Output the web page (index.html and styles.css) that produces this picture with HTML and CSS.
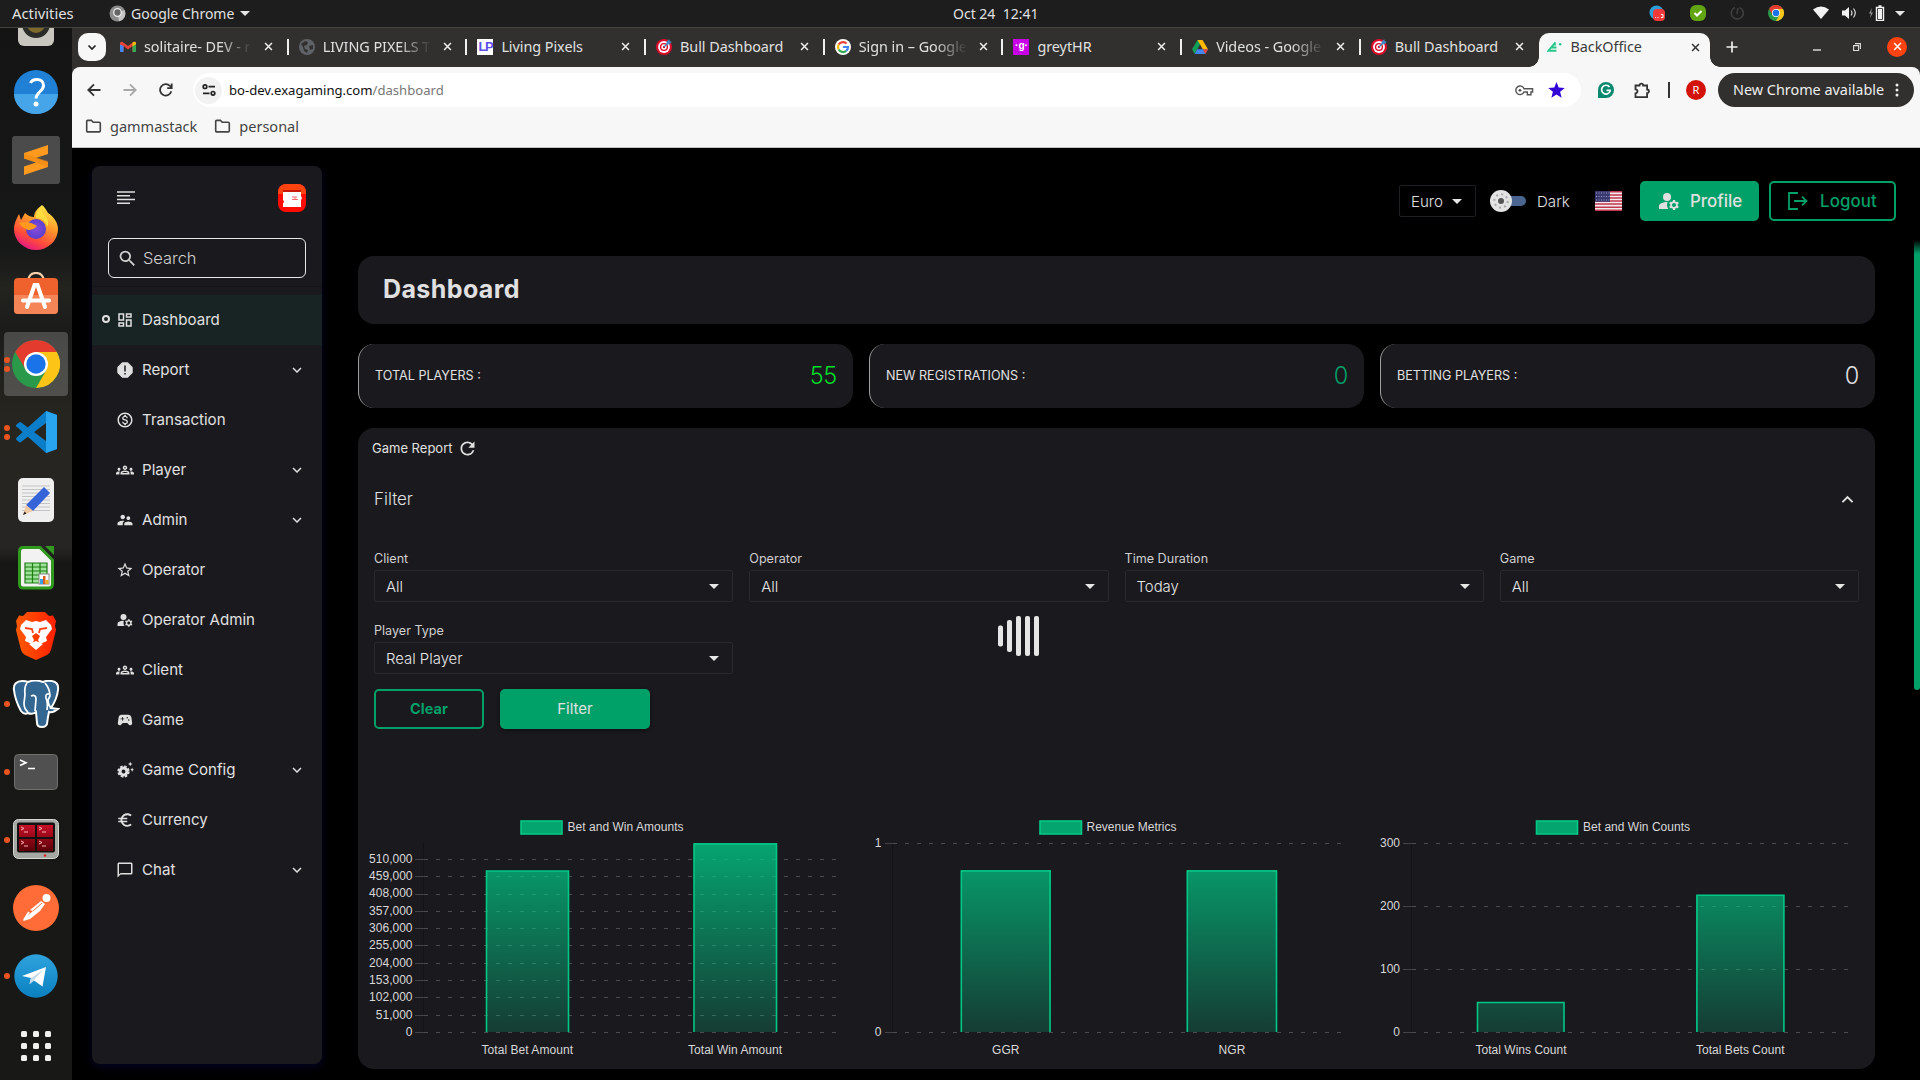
FILE: index.html
```
<!DOCTYPE html>
<html lang="en">
<head>
<meta charset="utf-8">
<title>BackOffice</title>
<link rel="stylesheet" href="styles.css">
</head>
<body>
<svg class="sprite" aria-hidden="true">
  <defs>
    <linearGradient id="bar" gradientUnits="userSpaceOnUse" x1="0" y1="43" x2="0" y2="233"><stop offset="0" stop-color="#00c885" stop-opacity=".8"/><stop offset="1" stop-color="#00c885" stop-opacity=".2"/></linearGradient>
    <linearGradient id="fox" x1=".8" y1="0" x2=".3" y2="1"><stop offset="0" stop-color="#fff44f"/><stop offset=".4" stop-color="#ff9a2a"/><stop offset=".75" stop-color="#ff4a3c"/><stop offset="1" stop-color="#e31587"/></linearGradient>
    <radialGradient id="globe"><stop offset="0" stop-color="#8a4bd8"/><stop offset="1" stop-color="#5b3fd0"/></radialGradient>
    <linearGradient id="tele" x1="0" y1="0" x2="0" y2="1"><stop offset="0" stop-color="#2fa3dd"/><stop offset="1" stop-color="#0a80c0"/></linearGradient>
    <linearGradient id="brave" x1="0" y1="0" x2="1" y2="0"><stop offset="0" stop-color="#ff5a00"/><stop offset="1" stop-color="#ff2000"/></linearGradient>
    <linearGradient id="red" x1="0" y1="0" x2="0" y2="1"><stop offset="0" stop-color="#c81028"/><stop offset="1" stop-color="#5c0008"/></linearGradient>
  </defs>
  <symbol id="search" viewBox="0 0 24 24"><path d="M15.5 14h-.79l-.28-.27A6.471 6.471 0 0 0 16 9.5 6.5 6.5 0 1 0 9.5 16c1.61 0 3.09-.59 4.23-1.57l.27.28v.79l5 4.99L20.49 19l-4.99-5zm-6 0C7.01 14 5 11.99 5 9.5S7.01 5 9.5 5 14 7.01 14 9.5 11.99 14 9.5 14z"/></symbol>
  <symbol id="dashboard" viewBox="0 0 24 24"><path d="M19 5v2h-4V5h4M9 5v6H5V5h4m10 8v6h-4v-6h4M9 17v2H5v-2h4M21 3h-8v6h8V3zM11 3H3v10h8V3zm10 8h-8v10h8V11zm-10 4H3v6h8v-6z"/></symbol>
  <symbol id="report" viewBox="0 0 24 24"><path d="M8.5 2.5h7l6 6v7l-6 6h-7l-6-6v-7zM11 6v8h2V6zm0 10v2h2v-2z" fill-rule="evenodd"/><path d="M8.5 2.5h7l6 6v7l-6 6h-7l-6-6v-7z" fill="none" stroke="currentColor" stroke-width="1.5" stroke-linejoin="round"/></symbol>
  <symbol id="money" viewBox="0 0 24 24"><path d="M12 2C6.48 2 2 6.48 2 12s4.48 10 10 10 10-4.48 10-10S17.52 2 12 2zm0 18c-4.41 0-8-3.59-8-8s3.59-8 8-8 8 3.59 8 8-3.59 8-8 8zm.31-8.86c-1.77-.45-2.34-.94-2.34-1.67 0-.84.79-1.43 2.1-1.43 1.38 0 1.9.66 1.94 1.64h1.71c-.05-1.34-.87-2.57-2.49-2.97V5H10.9v1.69c-1.51.32-2.72 1.3-2.72 2.81 0 1.79 1.49 2.69 3.66 3.21 1.95.46 2.34 1.15 2.34 1.87 0 .53-.39 1.39-2.1 1.39-1.6 0-2.23-.72-2.32-1.64H8.04c.1 1.7 1.36 2.66 2.86 2.97V19h2.34v-1.67c1.52-.29 2.72-1.16 2.73-2.77-.01-2.2-1.9-2.96-3.66-3.42z"/></symbol>
  <symbol id="groups" viewBox="0 0 24 24"><path fill-rule="evenodd" d="M12 12.75c1.63 0 3.07.39 4.24.9 1.08.48 1.76 1.56 1.76 2.73V18H6v-1.61c0-1.18.68-2.26 1.76-2.73 1.17-.52 2.61-.91 4.24-.91zM8.2 16h7.6c-.5-.8-2-1.3-3.8-1.3s-3.3.5-3.8 1.3zM4 13c1.1 0 2-.9 2-2s-.9-2-2-2-2 .9-2 2 .9 2 2 2zm1.13 1.1c-.37-.06-.74-.1-1.13-.1-.99 0-1.93.21-2.78.58C.48 14.9 0 15.62 0 16.43V18h4.5v-1.61c0-.83.23-1.61.63-2.29zM20 13c1.1 0 2-.9 2-2s-.9-2-2-2-2 .9-2 2 .9 2 2 2zm4 3.43c0-.81-.48-1.53-1.22-1.85-.85-.37-1.79-.58-2.78-.58-.39 0-.76.04-1.13.1.4.68.63 1.46.63 2.29V18H24v-1.57zM12 6c1.66 0 3 1.34 3 3s-1.34 3-3 3-3-1.34-3-3 1.34-3 3-3zm0 2a1 1 0 1 0 0 2 1 1 0 0 0 0-2z"/></symbol>
  <symbol id="admin" viewBox="0 0 24 24"><path d="M16.5 12c1.38 0 2.49-1.12 2.49-2.5S17.88 7 16.5 7C15.12 7 14 8.12 14 9.5s1.12 2.5 2.5 2.5zM9 11c1.66 0 2.99-1.34 2.99-3S10.66 5 9 5C7.34 5 6 6.34 6 8s1.34 3 3 3zm7.5 3c-1.83 0-5.5.92-5.5 2.75V19h11v-2.25c0-1.83-3.67-2.75-5.5-2.75zM9 13c-2.33 0-7 1.17-7 3.5V19h7v-2.25c0-.85.33-2.34 2.37-3.47C10.5 13.1 9.66 13 9 13z"/></symbol>
  <symbol id="star" viewBox="0 0 24 24"><path d="M22 9.24l-7.19-.62L12 2 9.19 8.63 2 9.24l5.46 4.73L5.82 21 12 17.27 18.18 21l-1.63-7.03L22 9.24zM12 15.4l-3.76 2.27 1-4.28-3.32-2.88 4.38-.38L12 6.1l1.71 4.04 4.38.38-3.32 2.88 1 4.28L12 15.4z"/></symbol>
  <symbol id="manage" viewBox="0 0 24 24"><circle cx="10" cy="8" r="4"/><path d="M10.67 13.02C10.45 13.01 10.23 13 10 13c-2.42 0-4.68.67-6.61 1.82C2.51 15.34 2 16.32 2 17.35V20h9.26A6.963 6.963 0 0 1 10 16c0-1.07.25-2.09.67-2.98zM20.75 16c0-.22-.03-.42-.06-.63l1.14-1.01-1-1.73-1.45.49c-.32-.27-.68-.48-1.08-.63L18 11h-2l-.3 1.49c-.4.15-.76.36-1.08.63l-1.45-.49-1 1.73 1.14 1.01c-.03.21-.06.41-.06.63s.03.42.06.63l-1.14 1.01 1 1.73 1.45-.49c.32.27.68.48 1.08.63L16 21h2l.3-1.49c.4-.15.76-.36 1.08-.63l1.45.49 1-1.73-1.14-1.01c.03-.21.06-.41.06-.63zM17 18c-1.1 0-2-.9-2-2s.9-2 2-2 2 .9 2 2-.9 2-2 2z"/></symbol>
  <symbol id="game" viewBox="0 0 24 24"><path d="M21.58 16.09l-1.09-7.66A3.996 3.996 0 0 0 16.53 5H7.47C5.48 5 3.79 6.46 3.51 8.43l-1.09 7.66C2.2 17.63 3.39 19 4.94 19c.68 0 1.32-.27 1.8-.75L9 16h6l2.25 2.25c.48.48 1.13.75 1.8.75 1.56 0 2.75-1.37 2.53-2.91zM11 11H9v2H8v-2H6v-1h2V8h1v2h2v1zm4-1c-.55 0-1-.45-1-1s.45-1 1-1 1 .45 1 1-.45 1-1 1zm2 3c-.55 0-1-.45-1-1s.45-1 1-1 1 .45 1 1-.45 1-1 1z"/></symbol>
  <symbol id="config" viewBox="0 0 24 24"><circle cx="10" cy="14" r="4.6" fill="none" stroke="currentColor" stroke-width="4"/><circle cx="10" cy="14" r="7" fill="none" stroke="currentColor" stroke-width="2.4" stroke-dasharray="3.4 2.1"/><path d="M19 1l.9 2.1L22 4l-2.1.9L19 7l-.9-2.1L16 4l2.1-.9zM21.500 8.500l.8 2.200 1.700.8-1.700.8-.8 2.200-.8-2.200-1.700-.8 1.700-.8z"/></symbol>
  <symbol id="euro" viewBox="0 0 24 24"><path d="M15 18.5c-2.51 0-4.68-1.42-5.76-3.5H15v-2H8.58c-.05-.33-.08-.66-.08-1s.03-.67.08-1H15V9H9.24C10.32 6.92 12.5 5.5 15 5.5c1.61 0 3.09.59 4.23 1.57L21 5.3C19.41 3.87 17.3 3 15 3c-3.92 0-7.24 2.51-8.48 6H3v2h3.06c-.04.33-.06.66-.06 1s.02.67.06 1H3v2h3.52c1.24 3.49 4.56 6 8.48 6 2.31 0 4.41-.87 6-2.3l-1.78-1.77c-1.13.98-2.6 1.57-4.22 1.57z"/></symbol>
  <symbol id="chat" viewBox="0 0 24 24"><path d="M20 2H4c-1.1 0-2 .9-2 2v18l4-4h14c1.1 0 2-.9 2-2V4c0-1.1-.9-2-2-2zm0 14H6l-2 2V4h16v12z"/></symbol>
  <symbol id="chevron" viewBox="0 0 24 24"><path d="M7.41 8.59 12 13.17l4.59-4.58L18 10l-6 6-6-6z"/></symbol>
  <symbol id="refresh" viewBox="0 0 24 24"><path d="M17.65 6.35A7.958 7.958 0 0 0 12 4c-4.42 0-7.99 3.58-7.99 8s3.57 8 7.99 8c3.73 0 6.84-2.55 7.73-6h-2.08A5.99 5.99 0 0 1 12 18c-3.31 0-6-2.69-6-6s2.69-6 6-6c1.66 0 3.14.69 4.22 1.78L13 11h7V4l-2.35 2.35z"/></symbol>
  <symbol id="close" viewBox="0 0 10 10"><path d="M1.2 1.2l7.6 7.6M8.8 1.2L1.2 8.8" stroke="currentColor" stroke-width="1.7"/></symbol>
  <symbol id="folder" viewBox="0 0 18 16"><path d="M1.8 3.2c0-.8.4-1.2 1.2-1.2h3.8l1.8 2H15c.8 0 1.2.4 1.2 1.2V13c0 .8-.4 1.2-1.2 1.2H3c-.8 0-1.2-.4-1.2-1.2z" fill="none" stroke="currentColor" stroke-width="1.7"/></symbol>
  <symbol id="chrome" viewBox="0 0 48 48"><circle cx="24" cy="24" r="24" fill="#2a9a4a"/><path d="M44.8 12A24 24 0 0 1 24 48L34.4 30 24 12z" fill="#fcc417"/><path d="M3.2 12A24 24 0 0 1 44.8 12H24L14 30z" fill="#e33b2e"/><circle cx="24" cy="24" r="12" fill="#fff"/><circle cx="24" cy="24" r="9.7" fill="#1a73e8"/></symbol>
  <symbol id="target" viewBox="0 0 16 16"><circle cx="8" cy="8" r="8" fill="#e00a2c"/><circle cx="8" cy="8" r="5.9" fill="#fff"/><circle cx="8" cy="8" r="4.1" fill="#e00a2c"/><circle cx="8" cy="8" r="2.7" fill="#fff"/><circle cx="8" cy="8" r="1.2" fill="#e00a2c"/><path d="M8 8l4-4" stroke="#3b88c3" stroke-width="1.2"/><path d="M10.5 5.500l.2-3L13.200.2l.6 2 2 .6-2.200 2.400z" fill="#3b88c3"/></symbol>
</svg>

<header class="topbar">
  <span class="activities">Activities</span>
  <span class="app"><svg width="17" height="17" viewBox="0 0 17 17"><circle cx="8.5" cy="8.5" r="8" fill="#8c8c8c"/><path d="M8.500 8.500L15.500 5A8 8 0 0 1 10 16.300z" fill="#c4c4c4"/><circle cx="8.5" cy="7.500" r="3.800" fill="#666" stroke="#eee" stroke-width="1.300"/></svg><span>Google Chrome</span><i class="caret"></i></span>
  <time class="clock">Oct 24&nbsp; 12:41</time>
  <span class="tray">
    <svg width="17" height="16" viewBox="0 0 17 16"><circle cx="7.5" cy="7.5" r="7" fill="#2d9fd8"/><rect x="4" y="4" width="12" height="12" rx="4" fill="#f33a3a"/><path d="M6 12.500h1M8.500 12.500h1M12 9.500h2v3h-2" stroke="#fff" stroke-width="1" fill="none"/></svg>
    <svg width="16" height="16" viewBox="0 0 16 16"><rect width="16" height="16" rx="6" fill="#61a612"/><path d="M4.500 8l2.500 2.500 4.500-4.500" fill="none" stroke="#fff" stroke-width="2"/></svg>
    <svg width="14" height="14" viewBox="0 0 14 14"><path d="M5 1.500A6 6 0 1 0 9.500 1.500M7 8l1-6" fill="none" stroke="#3d3d3d" stroke-width="1.700"/></svg>
    <svg width="16" height="16"><use href="#chrome"/></svg>
    <svg width="16" height="14" viewBox="0 0 16 14"><path d="M0 3.500Q8-2.500 16 3.500L8 13z" fill="#f2f2f2"/></svg>
    <svg width="15" height="14" viewBox="0 0 15 14"><path d="M0 4.500h3L7 1v12L3 9.500H0z" fill="#f2f2f2"/><path d="M9 4.500q2 2.500 0 5M11.500 2.500q3.500 4.500 0 9" fill="none" stroke="#ddd" stroke-width="1.200"/></svg>
    <svg width="17" height="16" viewBox="0 0 17 16"><path d="M4 3L1 8.500h2L2 13l3-5.500H3z" fill="#999"/><path d="M8.500 2.500h7v13h-7zM10.500 1h3" fill="none" stroke="#f2f2f2" stroke-width="1.400"/><path d="M10 4h4v10h-4z" fill="#f2f2f2"/></svg>
    <i class="caret"></i>
  </span>
</header>

<div class="desktop">
<nav class="dock">
  <div class="app-slot first"><svg width="36" height="44" viewBox="0 0 36 44"><rect width="36" height="44" rx="6" fill="#c9c6bf"/><circle cx="18" cy="22" r="14" fill="#2a2a28"/><circle cx="18" cy="22" r="9" fill="#7d6a2a"/></svg></div>
  <div class="app-slot"><svg width="44" height="44" viewBox="0 0 44 44"><circle cx="22" cy="22" r="22" fill="#1f80d6"/><path d="M0 24a22 20 0 0 0 44 0z" fill="#45a5e8"/><path d="M16.500 13Q18 9.500 23 9.500c4 0 6.500 2.500 6.500 6 0 5.500-7 6.500-7.500 13" fill="none" stroke="#fff" stroke-width="3"/><circle cx="22" cy="34" r="2.500" fill="#fff"/></svg></div>
  <div class="app-slot"><svg width="48" height="48" viewBox="0 0 48 48"><rect width="48" height="48" rx="3" fill="#4b4b4b"/><path d="M12 17L36 9v9l-12 4 12 4v5L12 39v-8.500l12-4-12-4z" fill="#ff9a1f"/><path d="M12 22.500v-5L36 25v6z" fill="#e8830f" opacity=".5"/></svg></div>
  <div class="app-slot lift"><svg width="46" height="46" viewBox="0 0 46 46"><path d="M29 1c3 2 4 5 6 8 6 4 10 10 10 16a22 21 0 0 1-44 0C1 19 4 14 6 10l2 6 4-7q4 4 9 4c0-5 4-9 8-12z" fill="url(#fox)"/><circle cx="23" cy="25" r="10" fill="url(#globe)"/><path d="M6 19q9-3 18 3-3 4-9 4-6-2-9-7z" fill="#ff9a1f"/><path d="M23 14q9 0 11 9 3-6-2-12-4-3-3-8-7 5-6 11z" fill="#ffdc3e"/></svg></div>
  <div class="app-slot lift"><svg width="46" height="46" viewBox="0 0 46 46"><path d="M15 9q1-8 8-8t8 8" fill="none" stroke="#f6d3ae" stroke-width="2.200"/><rect x="1" y="6" width="44" height="36" rx="4" fill="#f0622d"/><path d="M1 23h44v15q0 4-4 4H5q-4 0-4-4z" fill="#f58456"/><path d="M14 35l7.500-22h3L32 35M10 28.500h26" fill="none" stroke="#fff" stroke-width="4" stroke-linecap="round"/></svg></div>
  <div class="app-slot active two"><svg width="48" height="48"><use href="#chrome"/></svg></div>
  <div class="app-slot two"><svg width="42" height="42" viewBox="0 0 42 42"><path d="M31 0l11 4v34l-11 4L2 16q-2-1-.5-2.500L4 11.500q1-.8 2.200 0L31 30V12L6 31q-1 .8-2 0l-2.500-2q-1.200-1 .2-2.500z" fill="#0b7dc9"/><path d="M31 0l11 4v34l-11 4z" fill="#29a5f0"/></svg></div>
  <div class="app-slot"><svg width="38" height="46" viewBox="0 0 38 46"><rect x="1" y="1" width="36" height="44" rx="5" fill="#efeff0"/><path d="M5 9h28M5 12.500h28M5 16h28M5 19.500h28M5 23h28M5 26.500h28M5 30h28M5 33.500h28" stroke="#c3c3c5"/><path d="M27 10l6 6-17 18-7-6z" fill="#3564d8"/><path d="M9 28l7 6-10 4z" fill="#f1c9a0"/><path d="M6 38l1.500-3.500 2 2z" fill="#222"/></svg></div>
  <div class="app-slot"><svg width="38" height="46" viewBox="0 0 38 46"><path d="M6 2.500h17L35.500 15v24q0 4-4 4h-25q-4 0-4-4V6.500q0-4 3.500-4z" fill="#f2f2f2" stroke="#2f9a1e" stroke-width="3"/><path d="M28 1h9v9z" fill="#2f9a1e"/><rect x="8" y="18" width="22" height="20" fill="#9fe39a"/><path d="M8 18h22v20H8zM8 22h22M8 26h22M8 30h22M8 34h22M15.500 18v20M23 18v20" fill="none" stroke="#1d7d12" stroke-width="1.200"/><rect x="22" y="29" width="10" height="10" fill="#fff" stroke="#888"/><path d="M23 39v-5h3v5z" fill="#37a0e6"/><path d="M26 39v-8h2.500v8z" fill="#e05a1c"/><path d="M28.500 39v-4h3v4z" fill="#f0b020"/></svg></div>
  <div class="app-slot"><svg width="40" height="48" viewBox="0 0 40 48"><path d="M11 0h18l4 4 4-.5L40 9l-1 5 1 4-5 20q-1 3-4 5l-11 5-11-5q-3-2-4-5L0 18l1-4-1-5 3-5.500 4 .5z" fill="url(#brave)"/><path d="M5 13l5-5 6 2 4-1 4 1 6-2 5 5 1 4-6 8 1 4-7 3-2-4 2-4-4-3-4 3 2 4-2 4-7-3 1-4-6-8z" fill="#fff"/><path d="M9 16l7 1 1 4M31 16l-7 1-1 4" fill="none" stroke="#ff4316" stroke-width="1.800"/><path d="M13 32l7-3 7 3-7 6z" fill="#fff"/></svg></div>
  <div class="app-slot one"><svg width="48" height="48" viewBox="0 0 48 48"><path d="M2 10C1 4 5 1 10 1q4 0 6 1 7-3 15 0 4-2 9-1 7 1 6 9-1 9-7 18l7 1-3 2q-4 2-6 1-1 4-2 12-1 3-5 3-5 0-5-4l-1-11q-4 3-8 1-4 2-7-2Q3 20 2 10z" fill="#336791" stroke="#fff" stroke-width="2"/><path d="M15 3q-3 4-2 12l-1 8q0 6 4 9M33 3q5 6 5 13l-2 4q0 5 3 8M19 16q5-2 5 3l-1 12M38 14q-5-1-4 4 2 5 1 12" fill="none" stroke="#fff" stroke-width="1.700"/></svg></div>
  <div class="app-slot one"><svg width="44" height="36" viewBox="0 0 44 36"><rect x=".5" y=".5" width="43" height="35" rx="4" fill="#505050" stroke="#707070"/><path d="M6 6l6 2.700L6 11.500M14 14.500h7" fill="none" stroke="#fff" stroke-width="1.600"/></svg></div>
  <div class="app-slot one lift"><svg width="46" height="40" viewBox="0 0 46 40"><rect x=".5" y=".5" width="45" height="39" rx="5" fill="#a6a8a3" stroke="#d6d6d2"/><rect x="4" y="3.500" width="38" height="30" rx="2" fill="#111"/><path d="M6 6h16v12H6zM24 6h16v12H24zM6 20h16v12H6zM24 20h16v12H24z" fill="url(#red)"/><path d="M8 8l3 1.500L8 11M11 13h4M26 8l3 1.500-3 1.500M29 13h4M8 22l3 1.500L8 25M11 27h4M26 22l3 1.500-3 1.500M29 27h4" fill="none" stroke="#f7b6b6"/><circle cx="32" cy="36.500" r="1.200" fill="#e02020"/></svg></div>
  <div class="app-slot"><svg width="46" height="46" viewBox="0 0 46 46"><circle cx="23" cy="23" r="23" fill="#ff6c37"/><circle cx="33.500" cy="13" r="4" fill="#fff"/><path d="M16 27l-5 8" fill="none" stroke="#fff" stroke-width="2"/><path d="M28 16l4 3-5 7-10 8-7 2 2-3 8-7-3-1z" fill="#fff"/><path d="M29 18l-9 8" stroke="#ff6c37"/></svg></div>
  <div class="app-slot one"><svg width="44" height="44" viewBox="0 0 44 44"><circle cx="22" cy="22" r="21.700" fill="url(#tele)"/><path d="M8 22l24-9-3.500 19.500-8.500-6-4.500 3.500 1.500-6z" fill="#fff"/><path d="M17 24l12-8-9 10-4.500 4z" fill="#c6dced"/></svg></div>
  <div class="app-slot drop"><svg width="30" height="30" viewBox="0 0 30 30"><g fill="#f0f0ee"><rect width="6" height="6" rx="1.500"/><rect x="12" width="6" height="6" rx="1.500"/><rect x="24" width="6" height="6" rx="1.500"/><rect y="12" width="6" height="6" rx="1.500"/><rect x="12" y="12" width="6" height="6" rx="1.500"/><rect x="24" y="12" width="6" height="6" rx="1.500"/><rect y="24" width="6" height="6" rx="1.500"/><rect x="12" y="24" width="6" height="6" rx="1.500"/><rect x="24" y="24" width="6" height="6" rx="1.500"/></g></svg></div>
</nav>

<div class="window">
  <div class="tabstrip">
    <button class="tab-search"><svg width="12" height="12" viewBox="0 0 12 12"><path d="M2.500 4.500L6 8l3.500-3.500" fill="none" stroke="#222" stroke-width="1.700"/></svg></button>
    <div class="tab"><svg width="16" height="16" viewBox="0 0 16 16"><path d="M0 3.500V13h3.500V7L8 10.500 12.500 7v6H16V3.500L14 2.500 8 7 2 2.500z" fill="#ea4335"/><path d="M0 5.500V13h3.500V7z" fill="#4285f4"/><path d="M12.500 7v6H16V5z" fill="#34a853"/><path d="M12.500 3.500v4L16 5V3.500q-1.500-1.500-3.500 0z" fill="#fbbc04"/></svg><span class="fade">solitaire- DEV - r</span><svg class="x"><use href="#close"/></svg></div>
    <div class="tab"><svg width="15" height="15" viewBox="0 0 16 16"><circle cx="8" cy="8" r="8" fill="#5f6368"/><path d="M2 5l4-3 3 1-1 3-3 1 1 3 3 1-1 3-3-2-1-4zM10 7l4-1v4l-3 1z" fill="#31302e"/></svg><span class="fade">LIVING PIXELS T</span><svg class="x"><use href="#close"/></svg></div>
    <div class="tab"><b class="lp">LP</b><span>Living Pixels</span><svg class="x"><use href="#close"/></svg></div>
    <div class="tab"><svg width="16" height="16"><use href="#target"/></svg><span>Bull Dashboard</span><svg class="x"><use href="#close"/></svg></div>
    <div class="tab"><svg width="16" height="16" viewBox="0 0 16 16"><circle cx="8" cy="8" r="8" fill="#fff"/><g fill="none" stroke-width="2.200"><path d="M11.600 4.600A5 5 0 0 0 3.700 5.500" stroke="#ea4335"/><path d="M3.700 5.500a5 5 0 0 0 0 5" stroke="#fbbc04"/><path d="M3.700 10.500a5 5 0 0 0 7.500 1.400" stroke="#34a853"/><path d="M11.200 11.900A5 5 0 0 0 13 8H8" stroke="#4285f4"/></g></svg><span class="fade">Sign in – Google</span><svg class="x"><use href="#close"/></svg></div>
    <div class="tab"><b class="gr">·g·</b><span>greytHR</span><svg class="x"><use href="#close"/></svg></div>
    <div class="tab"><svg width="16" height="14" viewBox="0 0 16 14"><path d="M5.500 0h5L5.300 9.300 2.700 14 0 9.300z" fill="#0f9d58"/><path d="M5.500 0h5L16 9.300h-5.200z" fill="#ffba00"/><path d="M5.300 9.300H16L13.300 14H2.700z" fill="#4285f4"/><path d="M10.800 9.300H16L13.300 14z" fill="#ea4335"/></svg><span class="fade">Videos - Google</span><svg class="x"><use href="#close"/></svg></div>
    <div class="tab last"><svg width="16" height="16"><use href="#target"/></svg><span>Bull Dashboard</span><svg class="x"><use href="#close"/></svg></div>
    <div class="tab current"><svg width="17" height="16" viewBox="0 0 17 16"><path d="M9 3L1.500 12H10M4.500 8.500h5.500M7.500 5.500h2" fill="none" stroke="#27c78c" stroke-width="2"/><circle cx="14" cy="5" r="1.300" fill="#27c78c"/></svg><span>BackOffice</span><svg class="x"><use href="#close"/></svg></div>
    <svg class="plus" width="12" height="12" viewBox="0 0 12 12"><path d="M6 .5v11M.5 6h11" stroke="#eee" stroke-width="1.700"/></svg>
    <div class="controls">
      <svg width="8" height="8" viewBox="0 0 8 8"><path d="M0 7h8" stroke="#eee" stroke-width="1.300"/></svg>
      <svg width="8" height="8" viewBox="0 0 8 8"><path d="M.6 2.600h5v5h-5zM2 .6h5.400V6" fill="none" stroke="#ddd" stroke-width="1.100"/></svg>
      <span class="quit"><svg class="x"><use href="#close"/></svg></span>
    </div>
  </div>

  <div class="toolbar">
    <svg width="14" height="14" viewBox="0 0 14 14"><path d="M13.500 7H1.500M7 1.300L1.300 7 7 12.700" fill="none" stroke="#333" stroke-width="1.800"/></svg>
    <svg width="14" height="14" viewBox="0 0 14 14"><path d="M.5 7h12M7 1.300L12.700 7 7 12.700" fill="none" stroke="#a8a8a8" stroke-width="1.800"/></svg>
    <svg class="reload" width="14" height="14" viewBox="0 0 14 14"><path d="M12.300 8.300A5.700 5.700 0 1 1 11 3L12.500 4.500M12.700.5v4.600H8.200" fill="none" stroke="#333" stroke-width="1.800"/></svg>
    <div class="omnibox">
      <span class="site"><svg width="14" height="12" viewBox="0 0 14 12"><g fill="none" stroke="#222" stroke-width="1.700"><circle cx="3" cy="2.700" r="1.800"/><path d="M6.500 2.700H13M1 9.300h6.500"/><circle cx="11" cy="9.300" r="1.800"/></g></svg></span>
      <span class="url">bo-dev.exagaming.com<em>/dashboard</em></span>
      <svg class="key" width="19" height="11" viewBox="0 0 20 11"><path d="M9.500 3.600H18.500V7h-1.700v3H13V7H9.500A4.500 4.500 0 1 1 9.500 3.600z" fill="none" stroke="#555" stroke-width="1.500"/><circle cx="5.200" cy="5.300" r="1.500" fill="#555"/></svg>
      <svg width="17" height="16" viewBox="0 0 20 19"><path d="M10 0l2.600 6.600 7.200.5-5.500 4.600 1.800 7L10 14.800 3.900 18.700l1.800-7L.2 7.100l7.200-.5z" fill="#3206d6"/></svg>
    </div>
    <svg width="16" height="16" viewBox="0 0 16 16"><path d="M8 0a8 8 0 0 1 0 16H0V8a8 8 0 0 1 8-8z" fill="#0b8a70"/><path d="M11.500 5A4.400 4.400 0 1 0 12 9.500V8.300H8.500" fill="none" stroke="#fff" stroke-width="1.700"/></svg>
    <svg class="puzzle" width="17" height="17" viewBox="0 0 17 17"><path d="M1.500 3.500H5.500a1.800 1.800 0 0 1 3.600 0h4v4a1.800 1.800 0 0 1 0 3.600v4H1.500v-3.800a2 2 0 0 0 0-4z" fill="none" stroke="#333" stroke-width="1.800"/></svg>
    <i class="bar"></i>
    <b class="avatar">R</b>
    <span class="update">New Chrome available<svg width="4" height="14" viewBox="0 0 4 14"><g fill="#eee"><circle cx="2" cy="2" r="1.500"/><circle cx="2" cy="7" r="1.500"/><circle cx="2" cy="12" r="1.500"/></g></svg></span>
  </div>
  <div class="bookmarks"><svg><use href="#folder"/></svg><span class="b1">gammastack</span><svg><use href="#folder"/></svg><span>personal</span></div>

  <div class="page">
    <aside class="sidebar">
      <div class="brand">
        <svg width="18" height="14" viewBox="0 0 18 14"><path d="M0 1h18M0 4.700h13M0 8.500h18M0 12.200h13" stroke="#e0e0e0" stroke-width="1.500"/></svg>
        <svg width="28" height="28" viewBox="0 0 28 28"><rect width="28" height="28" rx="8" fill="#ff0d05"/><path d="M0 8a8 8 0 0 1 8-8h12a8 8 0 0 1 8 8v2H0z" fill="#ff4410"/><path d="M5 8h18v4l1 2-1 2v7H5v-4q2-1 0-3z" fill="#fff"/><path d="M5 7h18" stroke="#b80a05" stroke-width="1.500"/><path d="M14 13h5M14 15.500h6M17 13v3" stroke="#f66" stroke-width="1"/></svg>
      </div>
      <div class="search"><svg class="ic"><use href="#search"/></svg><span>Search</span></div>
      <ul class="menu">
        <li class="on"><svg class="ic"><use href="#dashboard"/></svg><span>Dashboard</span></li>
        <li><svg class="ic"><use href="#report"/></svg><span>Report</span><svg class="ic"><use href="#chevron"/></svg></li>
        <li><svg class="ic"><use href="#money"/></svg><span>Transaction</span></li>
        <li><svg class="ic"><use href="#groups"/></svg><span>Player</span><svg class="ic"><use href="#chevron"/></svg></li>
        <li><svg class="ic"><use href="#admin"/></svg><span>Admin</span><svg class="ic"><use href="#chevron"/></svg></li>
        <li><svg class="ic"><use href="#star"/></svg><span>Operator</span></li>
        <li><svg class="ic"><use href="#manage"/></svg><span>Operator Admin</span></li>
        <li><svg class="ic"><use href="#groups"/></svg><span>Client</span></li>
        <li><svg class="ic"><use href="#game"/></svg><span>Game</span></li>
        <li><svg class="ic"><use href="#config"/></svg><span>Game Config</span><svg class="ic"><use href="#chevron"/></svg></li>
        <li><svg class="ic"><use href="#euro"/></svg><span>Currency</span></li>
        <li><svg class="ic"><use href="#chat"/></svg><span>Chat</span><svg class="ic"><use href="#chevron"/></svg></li>
      </ul>
    </aside>

    <main class="main">
      <div class="actions">
        <span class="currency">Euro<i class="caret"></i></span>
        <svg class="switch" width="36" height="22" viewBox="0 0 36 22"><rect x="10" y="6" width="26" height="10" rx="5" fill="#4a658f"/><circle cx="11" cy="11" r="11" fill="#e3e3e3"/><circle cx="11" cy="11" r="3" fill="#555"/><circle cx="11" cy="11" r="6.700" fill="none" stroke="#aaa" stroke-width="2" stroke-dasharray="2 3.260"/></svg>
        <span class="mode">Dark</span>
        <svg class="flag" width="27" height="20" viewBox="0 0 27 20"><rect width="27" height="20" fill="#f3ecec"/><path d="M0 .8h27M0 3.900h27M0 7h27M0 10h27M0 13.100h27M0 16.200h27M0 19.200h27" stroke="#c4364e" stroke-width="1.540"/><rect width="15" height="10.800" fill="#3a3870"/><path d="M1 2h14M1 5.500h14M1 9h14" stroke="#9d9cc0" stroke-dasharray="1 1.500"/></svg>
        <span class="btn solid profile"><svg width="24" height="24"><use href="#manage"/></svg>Profile</span>
        <span class="btn line logout"><svg width="20" height="18" viewBox="0 0 20 18"><path d="M10 1H1v16h9M6 9h12.500M14 4.700L18.500 9 14 13.300" fill="none" stroke="currentColor" stroke-width="1.800"/></svg>Logout</span>
      </div>

      <div class="content">
        <h1 class="title">Dashboard</h1>
        <section class="stats">
          <div><span>TOTAL PLAYERS :</span><b class="green">55</b></div>
          <div><span>NEW REGISTRATIONS :</span><b class="teal">0</b></div>
          <div><span>BETTING PLAYERS :</span><b>0</b></div>
        </section>
        <section class="card">
          <div class="card-head">Game Report<svg class="ic"><use href="#refresh"/></svg></div>
          <div class="filter-head">Filter<svg class="ic up"><use href="#chevron"/></svg></div>
          <div class="fields">
            <label>Client<span class="select">All<i class="caret"></i></span></label>
            <label>Operator<span class="select">All<i class="caret"></i></span></label>
            <label>Time Duration<span class="select">Today<i class="caret"></i></span></label>
            <label>Game<span class="select">All<i class="caret"></i></span></label>
            <label>Player Type<span class="select">Real Player<i class="caret"></i></span></label>
          </div>
          <div class="buttons"><span class="btn line clear">Clear</span><span class="btn solid go">Filter</span></div>
          <div class="charts">
            <svg width="506" height="269" viewBox="0 0 506 269">
              <path class="axis" d="M65.500 43v190"/>
              <path class="tick" d="M57 59.500h9M57 76.500h9M57 94.500h9M57 111.500h9M57 128.500h9M57 145.500h9M57 163.500h9M57 180.500h9M57 197.500h9M57 215.500h9M57 232.500h9"/>
              <path class="grid" d="M66 59.500h412M66 76.500h412M66 94.500h412M66 111.500h412M66 128.500h412M66 145.500h412M66 163.500h412M66 180.500h412M66 197.500h412M66 215.500h412M66 232.500h412"/>
              <path class="fill" d="M128 71h83v161h-83zM336 43h83v189h-83z"/>
              <path class="edge" d="M128.500 232V71h82v161M336 232V44h82.500v188"/>
              <rect class="key-box" x="163" y="21" width="41" height="13"/>
              <text x="209.500" y="31" textLength="116">Bet and Win Amounts</text>
              <g class="end"><text x="54.500" y="63">510,000</text><text x="54.500" y="80">459,000</text><text x="54.500" y="97">408,000</text><text x="54.500" y="115">357,000</text><text x="54.500" y="132">306,000</text><text x="54.500" y="149">255,000</text><text x="54.500" y="167">204,000</text><text x="54.500" y="184">153,000</text><text x="54.500" y="201">102,000</text><text x="54.500" y="219">51,000</text><text x="54.500" y="236">0</text></g>
              <text x="123.500" y="254" textLength="91.500">Total Bet Amount</text><text x="330" y="254" textLength="94">Total Win Amount</text>
            </svg>
            <svg width="506" height="269" viewBox="506 0 506 269">
              <path class="axis" d="M534.500 43v190"/>
              <path class="tick" d="M527 43.500h8M527 232.500h8"/>
              <path class="grid" d="M535 43.500h448M535 232.500h448"/>
              <path class="fill" d="M603 70h90v162h-90zM829 70h90v162h-90z"/>
              <path class="edge" d="M603.300 232V71H692v161M829.300 232V71h89.200v161"/>
              <rect class="key-box" x="682" y="21" width="41.500" height="13"/>
              <text x="728.500" y="31" textLength="90">Revenue Metrics</text>
              <g class="end"><text x="523.500" y="47">1</text><text x="523.500" y="236">0</text></g>
              <text x="634" y="254" textLength="27.500">GGR</text><text x="860.500" y="254" textLength="27">NGR</text>
            </svg>
            <svg width="505" height="269" viewBox="1012 0 505 269">
              <path class="axis" d="M1053.500 43v190"/>
              <path class="tick" d="M1045 43.500h9M1045 106.500h9M1045 169.500h9M1045 232.500h9"/>
              <path class="grid" d="M1054 43.500h437M1054 106.500h437M1054 169.500h437M1054 232.500h437"/>
              <path class="fill" d="M1119 202h87v30h-87zM1338.500 95h87.500v137h-87.500z"/>
              <path class="edge" d="M1119.500 232v-29.500h86.500v29.500M1338.900 232V95.300h87v136.700"/>
              <rect class="key-box" x="1178.500" y="21" width="41" height="13"/>
              <text x="1225" y="31" textLength="107">Bet and Win Counts</text>
              <g class="end"><text x="1042" y="47">300</text><text x="1042" y="110">200</text><text x="1042" y="173">100</text><text x="1042" y="236">0</text></g>
              <text x="1117.500" y="254" textLength="91">Total Wins Count</text><text x="1338" y="254" textLength="88.500">Total Bets Count</text>
            </svg>
          </div>
          <svg class="loader" width="42" height="40" viewBox="0 0 42 40"><g fill="#e6e6e6"><rect y="9.500" width="5" height="21" rx="2"/><rect x="9" y="4" width="5" height="32" rx="2"/><rect x="18" width="5" height="40" rx="2"/><rect x="27" width="5" height="40" rx="2"/><rect x="36" width="5" height="40" rx="2"/></g></svg>
        </section>
      </div>
    </main>
    <i class="scrollbar"></i>
  </div>
</div>
</div>
</body>
</html>
```
FILE: styles.css
```
*, *::before, *::after { box-sizing: border-box; }
html, body { margin: 0; height: 1080px; overflow: hidden; background: #000; }
body { font-family: "Noto Sans", "Open Sans", sans-serif; color: #e0e0e0; }
svg { display: block; flex: none; }
ul { list-style: none; margin: 0; padding: 0; }
.sprite { position: absolute; width: 0; height: 0; }
.caret { width: 0; height: 0; border: 5px solid transparent; border-top-color: #e6e6e6; border-bottom: 0; flex: none; }

/* system bar */
.topbar { display: grid; grid-template-columns: 109px 844px 1fr auto; align-items: center; height: 28px; padding: 0 15px 1px 0; background: #1d1d1d; border-bottom: 1px solid #45443f; font-size: 14px; }
.activities { padding-left: 12px; font-size: 14.8px; }
.app { display: flex; align-items: center; }
.app span { margin: 0 6px 0 5px; }
.tray { display: flex; align-items: center; }
.tray svg:nth-child(n+2) { margin-left: 24px; }
.tray svg:nth-child(5) { margin-left: 29px; }
.tray svg:nth-child(6) { margin-left: 13px; }
.tray svg:nth-child(7) { margin-left: 11px; }
.tray .caret { margin-left: 10px; }

.desktop { display: flex; height: 1052px; }

/* dock */
.dock { width: 72px; flex: none; display: flex; flex-direction: column; background: linear-gradient(#131413 0, #161817 220px, #23231f 260px, #1b1c1a 300px, #26251f 390px, #262523 520px, #171716 535px, #181817 100%); }
.app-slot { display: flex; position: relative; align-items: center; justify-content: center; height: 68px; flex: none; }
.app-slot.first { height: 30px; align-items: flex-end; padding-bottom: 12px; overflow: hidden; }
.app-slot.lift { padding-bottom: 2px; }
.app-slot.drop { padding-top: 4px; }
.app-slot.active::after { content: ""; position: absolute; left: 4px; top: 2px; width: 64px; height: 64px; border-radius: 4px; background: #ffffff33; z-index: 0; }
.app-slot svg { position: relative; z-index: 1; }
.app-slot.one::before, .app-slot.two::before { content: ""; position: absolute; left: 4px; top: 31px; width: 6px; height: 6px; border-radius: 3px; background: #e95420; z-index: 2; }
.app-slot.two::before { top: 27px; box-shadow: 0 9px #e95420; }

/* browser chrome */
.window { width: 1848px; display: flex; flex-direction: column; background: #31302e; }
.tabstrip { display: flex; align-items: center; height: 39px; padding: 0 0 2px 6px; font-size: 14.4px; }
.tab-search { width: 28px; height: 28px; border: 0; border-radius: 10px; background: #f7f7f7; padding: 0; display: grid; place-items: center; margin-right: 4px; }
.tab { position: relative; display: flex; align-items: center; width: 178.7px; height: 16px; padding-left: 10px; border-right: 2px solid #f0f0f0; flex: none; }
.tab > svg:first-child, .tab > b { width: 16px; height: 16px; flex: none; }
.tab > span { width: 108px; margin-left: 8px; white-space: nowrap; overflow: hidden; line-height: 22px; letter-spacing: -.05px; }
.tab > .fade { -webkit-mask-image: linear-gradient(90deg, #000 70%, transparent 100%); mask-image: linear-gradient(90deg, #000 70%, transparent 100%); }
.x { width: 9px; height: 9px; }
.tab .x { margin-left: 12px; color: #eee; }
.tab.last { border-color: transparent; }
.tab.current { width: 171px; height: 34px; align-self: flex-end; margin: 0 0 -2px -1px; padding: 0 0 6px 8px; border: 0; border-radius: 10px 10px 0 0; background: #f7f7f7; color: #3b3b3b; }
.tab.current .x { color: #333; }
.tab.current::before, .tab.current::after { content: ""; position: absolute; bottom: 0; width: 10px; height: 10px; background: radial-gradient(circle at 0 0, transparent 9.5px, #f7f7f7 10px); left: -10px; }
.tab.current::after { left: auto; right: -10px; background: radial-gradient(circle at 100% 0, transparent 9.5px, #f7f7f7 10px); }
.lp { background: #fff; color: #5b4fe8; font: 700 13px/16px "Liberation Sans", sans-serif; letter-spacing: -1.5px; text-align: center; }
.gr { background: #c800e6; color: #fff; font: 700 10px/14px "Liberation Sans", sans-serif; text-align: center; }
.plus { margin-left: 16px; }
.controls { display: flex; align-items: center; margin-left: auto; gap: 32px; padding-right: 13px; }
.quit { width: 20px; height: 20px; border-radius: 50%; background: #ff4310; color: #fff; display: grid; place-items: center; margin-left: -6px; }

.toolbar { display: flex; align-items: center; height: 46px; padding: 0 6px 0 15px; background: #f7f7f7; border-radius: 8px 8px 0 0; }
.toolbar > svg { margin-right: 22px; }
.toolbar > .reload { margin-right: 20px; }
.omnibox { display: flex; align-items: center; width: 1388px; height: 34px; padding: 0 16px 0 2px; margin-right: 17px; border-radius: 17px; background: #fff; flex: none; }
.site { width: 27px; height: 27px; border-radius: 50%; background: #f2f2f2; display: grid; place-items: center; }
.url { margin: 0 auto 0 7px; color: #111; font-size: 13.1px; }
.url em { font-style: normal; color: #777; }
.key { margin-right: 14px; }
.toolbar > .puzzle { margin: 0 17px 0 -2px; }
.bar { width: 2px; height: 16px; background: #333; }
.avatar { width: 20px; height: 20px; margin: 0 12px 0 16px; border-radius: 50%; background: #d31208; color: #fff; font: 400 11px/20px "Noto Sans", sans-serif; text-align: center; }
.update { display: flex; align-items: center; justify-content: space-between; width: 196px; height: 34px; padding: 0 15px 1px; border-radius: 17px; background: #31302e; color: #eee; font-size: 14.4px; white-space: nowrap; }
.bookmarks { display: flex; align-items: center; height: 35px; padding: 0 0 8px 13px; background: #f7f7f7; border-bottom: 1px solid #c4c4c4; color: #444; font-size: 14.5px; }
.bookmarks svg { width: 17px; height: 16px; margin-right: 8px; }
.b1 { margin-right: 17px; }

/* back office */
.page { position: relative; flex: 1; display: flex; padding-left: 20px; background: #000; font-family: Inter, sans-serif; }
.ic { width: 18px; height: 18px; fill: currentColor; }
.sidebar { width: 230px; height: 898px; margin-top: 18px; flex: none; border-radius: 8px; background: #1a191e; box-shadow: 0 3px 8px #08063a99; }
.brand { display: flex; align-items: center; justify-content: space-between; height: 64px; padding: 0 16px 0 25px; }
.search { display: flex; align-items: center; gap: 5px; height: 40px; margin: 8px 16px 0; padding-left: 8px; border: 1px solid #e8e8e8; border-radius: 6px; color: #d0d0d0; font-size: 16.4px; font-weight: 300; }
.search .ic { width: 21px; height: 21px; }
.menu { margin-top: 8px; padding-top: 8px; border-top: 1px solid #151518; }
.menu li { position: relative; display: flex; align-items: center; height: 50px; padding: 0 16px 1px 24px; font-size: 15.1px; }
.menu span { margin: 0 auto 0 8px; }
.menu .on { background: #182423; }
.on::before { content: ""; position: absolute; left: 10px; top: 20px; width: 8px; height: 8px; border: 2px solid #e0e0e0; border-radius: 50%; }
.main { flex: 1; padding: 33px 0 0 36px; }
.actions { display: flex; align-items: center; height: 40px; padding-right: 24px; justify-content: flex-end; font-size: 15.1px; font-weight: 300; }
.currency { display: flex; align-items: center; justify-content: space-between; width: 77px; height: 32px; padding: 0 13px 0 11px; border: 1px solid #1f1f23; border-radius: 2px; }
.switch { margin: 0 11px 0 14px; }
.mode { width: 33px; margin-right: 25px; }
.flag { margin-right: 18px; }
.btn { display: flex; align-items: center; justify-content: center; height: 40px; border-radius: 5px; }
.btn.solid { background: #00a069; }
.btn.line { border: 2px solid #00a069; color: #00a069; }
.profile, .logout { font-size: 16.9px; font-weight: 500; padding-bottom: 1px; }
.profile { width: 119px; gap: 9px; margin-right: 10px; fill: currentColor; }
.logout { width: 127px; gap: 12px; letter-spacing: .1px; }
.content { margin: 35px 45px 0 0; }
.title { display: flex; align-items: center; height: 68px; margin: 0; padding: 0 25px 2px; border-radius: 16px; background: #1a191e; font-size: 25px; letter-spacing: .4px; }
.stats { display: grid; grid-template-columns: repeat(3, 495px); gap: 16px; margin: 20px 0; }
.stats div { display: flex; align-items: center; justify-content: space-between; height: 64px; padding: 0 16px 1px; border-left: 1px solid #a0a0a0; border-radius: 16px; background: #1a191e; font-size: 12.6px; }
.stats b { font-size: 23.5px; font-weight: 300; letter-spacing: -.3px; }
.green { color: #00dc28; }
.teal { color: #00a069; }
.card { position: relative; height: 641px; border-radius: 16px; background: #1a191e; }
.card-head { display: flex; align-items: center; gap: 5px; height: 40px; padding-left: 14px; font-size: 13px; }
.card-head .ic { width: 21px; height: 21px; }
.filter-head { display: flex; align-items: center; justify-content: space-between; height: 62px; padding: 0 16px; font-size: 16.9px; font-weight: 300; }
.ic.up { width: 23px; height: 23px; transform: rotate(180deg); }
.fields { display: grid; grid-template-columns: repeat(4, 1fr); gap: 18px 16px; padding: 18px 16px 0; font-size: 12.6px; }
.fields label { display: block; line-height: 22px; color: #cfcfcf; }
.select { display: flex; align-items: center; justify-content: space-between; height: 32px; padding: 1px 13px 0 11px; border: 1px solid #29292e; border-radius: 2px; color: #e6e6e6; font-size: 14.9px; font-weight: 300; }
.buttons { display: flex; gap: 16px; margin: 15px 16px 71px; }
.clear { width: 110px; font-size: 14.5px; font-weight: 700; }
.go { width: 150px; font-size: 15px; font-weight: 400; box-shadow: 0 2px 4px #0006; }
.btn.clear, .btn.go { padding-bottom: 1px; }
.charts { display: flex; }
.charts text { font: 12px "Liberation Sans", sans-serif; fill: #d8d8d8; }
.end { text-anchor: end; }
.axis { stroke: #131316; fill: none; }
.tick { stroke: #434348; fill: none; }
.grid { stroke: #4b4b50; fill: none; stroke-dasharray: 4 8; }
.fill { fill: url(#bar); }
.edge { stroke: #00c885; stroke-width: 1.6; fill: none; }
.key-box { fill: #00c885cc; stroke: #00c885; stroke-width: 1.6; }
.loader { position: absolute; left: 640px; top: 188px; }
.scrollbar { position: absolute; right: 0; top: 92px; width: 6px; height: 450px; border-radius: 3px; background: linear-gradient(transparent, #00a069 14px); }
```
